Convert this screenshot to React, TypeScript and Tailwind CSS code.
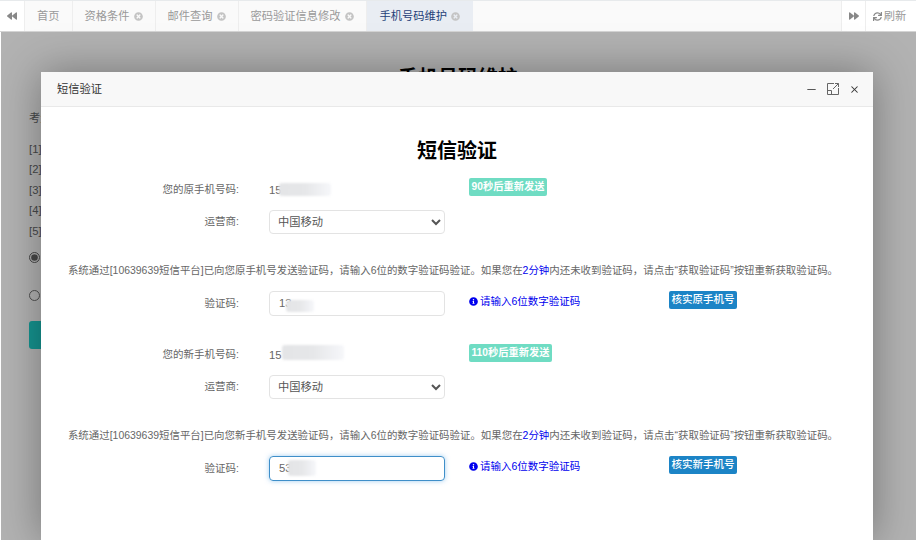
import { Minus, X } from "lucide-react";
import { FaBackward, FaForward, FaInfoCircle, FaSync, FaTimesCircle } from "react-icons/fa";

const tabs = ["资格条件", "邮件查询", "密码验证信息修改"];

function Smudge({ className }: { className: string }) {
  return <span className={`absolute rounded-[3px] bg-linear-to-r from-[#e4e5e7] via-[#e6e7e9] to-[#f6f7fa] blur-[1px] ${className}`} />;
}

function Label({ children }: { children: string }) {
  return <div className="w-[198px] shrink-0 text-right text-[10.5px] text-[#666]">{children}:</div>;
}

function Row({ label, children, className = "" }: { label: string; children: React.ReactNode; className?: string }) {
  return (
    <div className={`flex items-center ${className}`}>
      <Label>{label}</Label>
      <div className="ml-[30px] w-[176px] shrink-0">{children}</div>
    </div>
  );
}

function Carrier() {
  return (
    <select className="h-[24px] w-full rounded-[4px] border border-[#e3e3e3] bg-white pl-[4px] text-[11.25px] text-[#555]">
      <option>中国移动</option>
    </select>
  );
}

function Notice({ target }: { target: string }) {
  return (
    <p className="mr-[8px] text-center text-[10.45px] leading-4 text-[#666]">
      系统通过[10639639短信平台]已向您{target}手机号发送验证码，请输入6位的数字验证码验证。如果您在
      <span className="text-[#0000ee]">2分钟</span>
      内还未收到验证码，请点击“获取验证码”按钮重新获取验证码。
    </p>
  );
}

function Hint() {
  return (
    <span className="flex h-[21px] items-center gap-[2px] text-[10.5px] text-[#0000ee]">
      <FaInfoCircle className="size-[9px]" />
      请输入6位数字验证码
    </span>
  );
}

function Confirm({ children }: { children: string }) {
  return (
    <button className="flex h-[18px] w-[68px] items-center justify-center rounded-[2px] bg-[#1c84c6] text-[10.5px] font-medium text-white">
      {children}
    </button>
  );
}

function Resend({ children, className }: { children: string; className: string }) {
  return (
    <span className={`flex h-[18px] items-center justify-center rounded-[2px] bg-[#6fdcc3] text-[10.25px] font-bold text-white ${className}`}>
      {children}
    </span>
  );
}

export default function App() {
  return (
    <div className="relative h-[540px] w-[916px] overflow-hidden bg-white font-['Liberation_Sans','Noto_Sans_CJK_SC',sans-serif] text-[11.25px]">
      <div className="flex h-[32px] border-y border-t-[#e7eaec] border-b-[#d4d4d4] bg-[#fafafa] text-[#999]">
        <div className="flex w-[25px] items-center justify-center border-r border-[#eee] bg-white">
          <FaBackward className="size-[10px] text-[#888]" />
        </div>
        <div className="flex items-center border-r border-[#eee] px-3">首页</div>
        {tabs.map((t) => (
          <div key={t} className="flex items-center gap-[4px] border-r border-[#eee] px-3">
            {t}
            <FaTimesCircle className="size-[9px] text-[#c4c4c4]" />
          </div>
        ))}
        <div className="flex items-center gap-[4px] bg-[#e9edf3] px-[13px] text-[#1f3f78]">
          手机号码维护
          <FaTimesCircle className="size-[9px] text-[#c4c4c4]" />
        </div>
        <div className="flex-1" />
        <div className="flex w-[25px] items-center justify-center border-x border-[#eee] bg-white">
          <FaForward className="size-[10px] text-[#888]" />
        </div>
        <div className="flex w-[50px] items-center justify-center gap-[2px] bg-white pr-[3px]">
          <FaSync className="size-[9px] text-[#888]" />
          刷新
        </div>
      </div>

      <div className="px-[29px] text-[#676a6c]">
        <h1 className="mt-[31px] text-center text-[20px] font-bold text-black">手机号码维护</h1>
        <p className="mt-[17px]">考生须知</p>
        <div className="mt-[15px] flex flex-col gap-[6.5px]">
          <p className="leading-[14px]">[1]</p>
          <p className="leading-[14px]">[2]</p>
          <p className="leading-[14px]">[3]</p>
          <p className="leading-[14px]">[4]</p>
          <p className="leading-[14px]">[5]</p>
        </div>
        <input type="radio" defaultChecked className="mt-[14px] block size-[11px] accent-[#666]" />
        <input type="radio" className="mt-[27px] block size-[11px] accent-[#666]" />
        <div className="mt-[20px] h-[28px] w-[60px] rounded-[3px] bg-[#1fd5ce]" />
      </div>

      <div className="absolute inset-0 top-[32px] left-px bg-black/30" />

      <div className="absolute top-[72px] left-[41px] h-[468px] w-[832px] bg-white shadow-[0_0_40px_rgba(0,0,0,0.35)]">
        <div className="flex h-[35px] items-center justify-between border-b border-[#e9e9e9] bg-[#f8f8f8] pr-[13px] pl-4 text-[#333]">
          <span>短信验证</span>
          <div className="flex items-center gap-[9px] text-[#333]">
            <Minus className="size-[13px]" strokeWidth={1.5} />
            <svg viewBox="0 0 12 12" className="size-[12px]" fill="none" stroke="#666" strokeWidth="1">
              <path d="M7 .5H.5v11h11V5M.5 7.5h4v4M6 6l5.5-5.5M8 .5h3.5V4" />
            </svg>
            <X className="ml-px size-[11px]" strokeWidth={2.25} />
          </div>
        </div>

        <h2 className="mt-[30px] text-center text-[20px] leading-[28px] font-bold text-black">短信验证</h2>

        <div className="relative mt-[15px]">
          <Row label="您的原手机号码" className="h-[20px]">
            <span className="relative block text-[#666]">
              15
              <Smudge className="top-[1px] left-[10px] h-[13px] w-[52px]" />
            </span>
          </Row>
          <Resend className="absolute top-[-2px] left-[428px] w-[78px]">90秒后重新发送</Resend>
        </div>
        <Row label="运营商" className="mt-[10px]">
          <Carrier />
        </Row>
        <div className="mt-[29px]">
          <Notice target="原" />
        </div>
        <div className="mt-[12px] flex items-center">
          <Label>验证码</Label>
          <div className="relative ml-[30px] h-[25px] w-[176px] shrink-0 rounded-[4px] border border-[#e3e3e3] pl-[9px] leading-[23px] text-[#666]">
            13
            <Smudge className="top-[8px] left-[16px] h-[12px] w-[28px]" />
          </div>
          <div className="ml-6 w-[200px] self-start">
            <Hint />
          </div>
          <div className="self-start">
            <Confirm>核实原手机号</Confirm>
          </div>
        </div>

        <div className="relative mt-[29px]">
          <Row label="您的新手机号码" className="h-[20px]">
            <span className="relative block text-[#666]">
              15
              <Smudge className="top-[-2px] left-[13px] h-[15px] w-[62px]" />
            </span>
          </Row>
          <Resend className="absolute top-[-1px] left-[428px] w-[83px]">110秒后重新发送</Resend>
        </div>
        <Row label="运营商" className="mt-[10px]">
          <Carrier />
        </Row>
        <div className="mt-[29px]">
          <Notice target="新" />
        </div>
        <div className="mt-[12px] flex items-center">
          <Label>验证码</Label>
          <div className="relative ml-[30px] h-[25px] w-[176px] shrink-0 rounded-[4px] border border-[#3f8fc9] pl-[9px] leading-[23px] text-[#666] shadow-[0_0_5px_rgba(102,175,233,0.6)]">
            53
            <Smudge className="top-[3px] left-[18px] h-[16px] w-[28px]" />
          </div>
          <div className="ml-6 w-[200px] self-start">
            <Hint />
          </div>
          <div className="self-start">
            <Confirm>核实新手机号</Confirm>
          </div>
        </div>
      </div>
    </div>
  );
}
